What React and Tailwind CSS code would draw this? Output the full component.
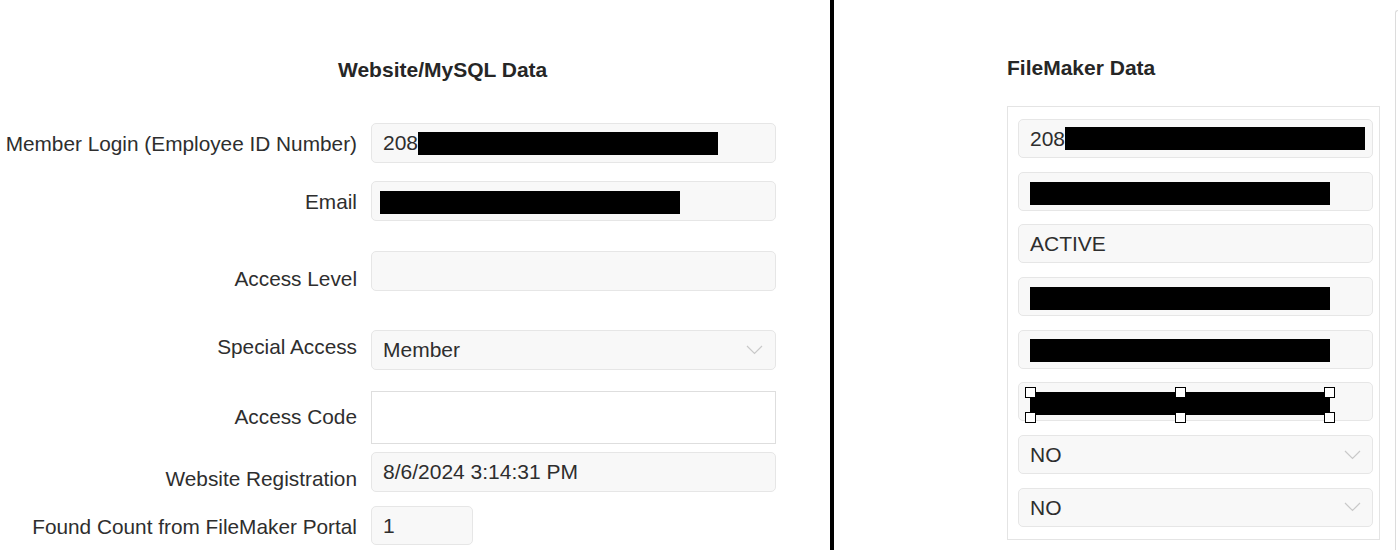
import React from "react";

function Chevron() {
  return (
    <svg width="17" height="10" viewBox="0 0 17 10" fill="none" className="shrink-0">
      <polyline points="1,1 8.5,8.5 16,1" stroke="#c9c9c9" strokeWidth="1.2" fill="none" />
    </svg>
  );
}

function Handle({ className }) {
  return <span className={"absolute h-[11px] w-[11px] border border-black bg-white " + className} />;
}

export default function App() {
  return (
    <div className="flex h-[550px] w-[1398px] overflow-hidden bg-white font-['Liberation_Sans',Arial,sans-serif] text-[#2e2e2e]">
      {/* Left panel */}
      <div className="w-[830px] shrink-0">
        <div className="pl-[338px] pt-[58px] text-[21px] font-bold leading-[24px] text-[#262626]">Website/MySQL Data</div>

        {/* Row 1 */}
        <div className="mt-[41px] flex">
          <div className="w-[357px] whitespace-nowrap pt-[9px] text-right text-[20.8px] leading-[24px]">Member Login (Employee ID Number)</div>
          <div className="ml-[14px] flex h-[40px] w-[405px] items-center rounded-[5px] border border-[#e6e6e6] bg-[#f8f8f8] pl-[11px] text-[21px]">
            <span>208</span>
            <span className="inline-block h-[23px] w-[300px] bg-black" />
          </div>
        </div>

        {/* Row 2 */}
        <div className="mt-[18px] flex">
          <div className="w-[357px] pt-[9px] text-right text-[20.8px] leading-[24px]">Email</div>
          <div className="ml-[14px] flex h-[40px] w-[405px] items-center rounded-[5px] border border-[#e6e6e6] bg-[#f8f8f8] pl-[8px] text-[21px]">
            <span className="mt-[3px] inline-block h-[23px] w-[300px] bg-black" />
          </div>
        </div>

        {/* Row 3 */}
        <div className="mt-[30px] flex">
          <div className="w-[357px] pt-[16px] text-right text-[20.8px] leading-[24px]">Access Level</div>
          <div className="ml-[14px] h-[40px] w-[405px] rounded-[5px] border border-[#e6e6e6] bg-[#f8f8f8]" />
        </div>

        {/* Row 4 */}
        <div className="mt-[39px] flex">
          <div className="w-[357px] pt-[5px] text-right text-[20.8px] leading-[24px]">Special Access</div>
          <div className="ml-[14px] flex h-[40px] w-[405px] items-center justify-between rounded-[5px] border border-[#e6e6e6] bg-[#f8f8f8] pl-[11px] pr-[12px] text-[21px]">
            <span>Member</span>
            <Chevron />
          </div>
        </div>

        {/* Row 5 */}
        <div className="mt-[21px] flex">
          <div className="w-[357px] pt-[14px] text-right text-[20.8px] leading-[24px]">Access Code</div>
          <div className="ml-[14px] h-[53px] w-[405px] border border-[#dedede] bg-white" />
        </div>

        {/* Row 6 */}
        <div className="mt-[8px] flex">
          <div className="w-[357px] pt-[15px] text-right text-[20.8px] leading-[24px]">Website Registration</div>
          <div className="ml-[14px] flex h-[40px] w-[405px] items-center rounded-[5px] border border-[#e6e6e6] bg-[#f8f8f8] pl-[11px] text-[21px]">
            <span>8/6/2024 3:14:31 PM</span>
          </div>
        </div>

        {/* Row 7 */}
        <div className="mt-[14px] flex">
          <div className="w-[357px] whitespace-nowrap pt-[9px] text-right text-[20.8px] leading-[24px]">Found Count from FileMaker Portal</div>
          <div className="ml-[14px] flex h-[39px] w-[102px] items-center rounded-[5px] border border-[#e6e6e6] bg-[#f8f8f8] pl-[11px] text-[21px]">
            <span>1</span>
          </div>
        </div>
      </div>

      {/* Divider */}
      <div className="w-[4px] shrink-0 bg-black" />

      {/* Right panel */}
      <div className="flex flex-1">
        <div className="pl-[173px]">
          <div className="pt-[56px] text-[21px] font-bold leading-[24px] text-[#262626]">FileMaker Data</div>
          <div className="mt-[26px] flex h-[434px] w-[373px] flex-col gap-[13.7px] border border-[#e4e4e4] pl-[10px] pt-[12px]">
            <div className="flex h-[39px] w-[355px] shrink-0 items-center rounded-[5px] border border-[#e6e6e6] bg-[#f8f8f8] pl-[11px] text-[21px]">
              <span>208</span>
              <span className="inline-block h-[23px] w-[300px] bg-black" />
            </div>
            <div className="flex h-[39px] w-[355px] shrink-0 items-center rounded-[5px] border border-[#e6e6e6] bg-[#f8f8f8] pl-[11px]">
              <span className="mt-[5px] inline-block h-[23px] w-[300px] bg-black" />
            </div>
            <div className="flex h-[39px] w-[355px] shrink-0 items-center rounded-[5px] border border-[#e6e6e6] bg-[#f8f8f8] pl-[11px] text-[21px]">
              <span>ACTIVE</span>
            </div>
            <div className="flex h-[39px] w-[355px] shrink-0 items-center rounded-[5px] border border-[#e6e6e6] bg-[#f8f8f8] pl-[11px]">
              <span className="mt-[3px] inline-block h-[23px] w-[300px] bg-black" />
            </div>
            <div className="flex h-[39px] w-[355px] shrink-0 items-center rounded-[5px] border border-[#e6e6e6] bg-[#f8f8f8] pl-[11px]">
              <span className="mt-[3px] inline-block h-[23px] w-[300px] bg-black" />
            </div>
            <div className="flex h-[39px] w-[355px] shrink-0 items-center rounded-[5px] border border-[#e6e6e6] bg-[#f8f8f8] pl-[11px]">
              <span className="relative mt-[3px] inline-block h-[23px] w-[300px] bg-black">
                <Handle className="-left-[5px] -top-[5px]" />
                <Handle className="left-[145px] -top-[5px]" />
                <Handle className="-right-[5px] -top-[5px]" />
                <Handle className="-bottom-[8px] -left-[5px]" />
                <Handle className="-bottom-[8px] left-[145px]" />
                <Handle className="-bottom-[8px] -right-[5px]" />
              </span>
            </div>
            <div className="flex h-[39px] w-[355px] shrink-0 items-center justify-between rounded-[5px] border border-[#e6e6e6] bg-[#f8f8f8] pl-[11px] pr-[11px] text-[21px]">
              <span>NO</span>
              <Chevron />
            </div>
            <div className="flex h-[39px] w-[355px] shrink-0 items-center justify-between rounded-[5px] border border-[#e6e6e6] bg-[#f8f8f8] pl-[11px] pr-[11px] text-[21px]">
              <span>NO</span>
              <Chevron />
            </div>
          </div>
        </div>
        <div className="ml-auto mt-[10px] h-[540px] w-[3px] rounded-tl-[6px] border-l border-t border-[#dcdcdc]" />
      </div>
    </div>
  );
}
